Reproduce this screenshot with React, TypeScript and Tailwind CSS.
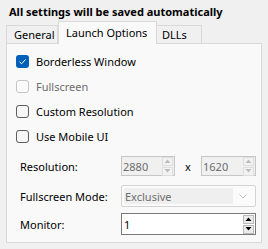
import React from "react";

const font = { fontFamily: '"Noto Sans", "Open Sans", sans-serif' };

function Check({ checked, disabled, label }: { checked?: boolean; disabled?: boolean; label: string }) {
  return (
    <div className="flex h-[25px] items-center">
      {checked ? (
        <span className="flex h-[13px] w-[13px] items-center justify-center rounded-[3px] bg-[#005fb8]">
          <svg width="9" height="9" viewBox="0 0 9 9" fill="none">
            <path d="M1.5 4.8 L3.6 6.8 L7.6 2.4" stroke="white" strokeWidth="1" />
          </svg>
        </span>
      ) : (
        <span
          className={
            disabled
              ? "h-[13px] w-[13px] rounded-[3px] border border-[#c5c5c5] bg-[#fbfbfb]"
              : "h-[13px] w-[13px] rounded-[3px] border border-[#5d5d5d] bg-[#f6f6f6]"
          }
        />
      )}
      <span className={disabled ? "ml-[7px] text-[#6d6d6d]" : "ml-[7px] text-black"}>{label}</span>
    </div>
  );
}

function Arrow({ up, color }: { up?: boolean; color: string }) {
  return (
    <svg width="7" height="4" viewBox="0 0 7 4">
      {up ? <path d="M0.5 4 L3.5 0.5 L6.5 4 Z" fill={color} /> : <path d="M0.5 0 L3.5 3.5 L6.5 0 Z" fill={color} />}
    </svg>
  );
}

function SpinButtons({ disabled }: { disabled?: boolean }) {
  const c = disabled ? "#bdbdbd" : "#000";
  const box = disabled
    ? "flex h-[9px] w-[11px] items-center justify-center border border-[#dedede] bg-[#f2f2f2]"
    : "flex h-[9px] w-[11px] items-center justify-center border border-[#b9b9b9] bg-[#ececec]";
  return (
    <div className="flex flex-col gap-px pr-[1px]">
      <div className={box}>
        <Arrow up color={c} />
      </div>
      <div className={box}>
        <Arrow color={c} />
      </div>
    </div>
  );
}

export default function App() {
  return (
    <div className="h-[249px] w-[268px] overflow-hidden bg-[#f0f0f0] text-[11px] leading-none text-black" style={font}>
      <div className="px-[9px] pt-[6px] text-[11px] font-bold">All settings will be saved automatically</div>

      <div className="mt-[4px] flex items-end px-[6px]">
        <div className="flex h-[18px] w-[52px] items-center border border-b-0 border-[#d9d9d9] bg-[#f0f0f0] pl-[7px]">General</div>
        <div className="relative z-10 -mb-px flex h-[23px] w-[99px] items-center border border-b-0 border-[#d9d9d9] bg-[#f9f9f9] pb-[2px] pl-[7px]">
          Launch Options
        </div>
        <div className="flex h-[18px] w-[45px] items-center border border-b-0 border-l-0 border-[#d9d9d9] bg-[#f0f0f0] pl-[5px]">DLLs</div>
      </div>

      <div className="mx-[6px] h-[200px] border border-[#d9d9d9] bg-[#f9f9f9] pt-[5px]">
        <div className="pl-[9px]">
          <Check checked label="Borderless Window" />
          <Check disabled label="Fullscreen" />
          <Check label="Custom Resolution" />
          <Check label="Use Mobile UI" />
        </div>

        <div className="mt-[7px] flex h-[20px] items-center pl-[13px]">
          <span className="w-[101px]">Resolution:</span>
          <div className="flex h-[20px] w-[54px] items-center justify-between border border-[#c6c6c6] bg-[#f0f0f0] pl-[1px]">
            <span className="text-[#6d6d6d]">2880</span>
            <SpinButtons disabled />
          </div>
          <span className="w-[26px] text-center">x</span>
          <div className="flex h-[20px] w-[55px] items-center justify-between border border-[#c6c6c6] bg-[#f0f0f0] pl-[1px]">
            <span className="text-[#6d6d6d]">1620</span>
            <SpinButtons disabled />
          </div>
        </div>

        <div className="mt-[9px] flex h-[22px] items-center pl-[13px]">
          <span className="w-[101px]">Fullscreen Mode:</span>
          <div className="flex h-[22px] w-[135px] items-center rounded-[2px] border border-[#d4d4d4] bg-[#fbfbfb] p-[2px]">
            <div className="flex h-full flex-1 items-center bg-[#efefef] pl-[1px] text-[#6d6d6d]">Exclusive</div>
            <div className="flex w-[20px] items-center justify-center">
              <svg width="8" height="5" viewBox="0 0 8 5" fill="none">
                <path d="M0.5 0.5 L4 4 L7.5 0.5" stroke="#bcbcbc" strokeWidth="1" />
              </svg>
            </div>
          </div>
        </div>

        <div className="mt-[6px] flex h-[22px] items-center pl-[13px]">
          <span className="w-[101px]">Monitor:</span>
          <div className="flex h-[22px] w-[135px] items-center justify-between border border-[#7a7a7a] bg-white pl-[2px]">
            <span>1</span>
            <SpinButtons />
          </div>
        </div>
      </div>
    </div>
  );
}
